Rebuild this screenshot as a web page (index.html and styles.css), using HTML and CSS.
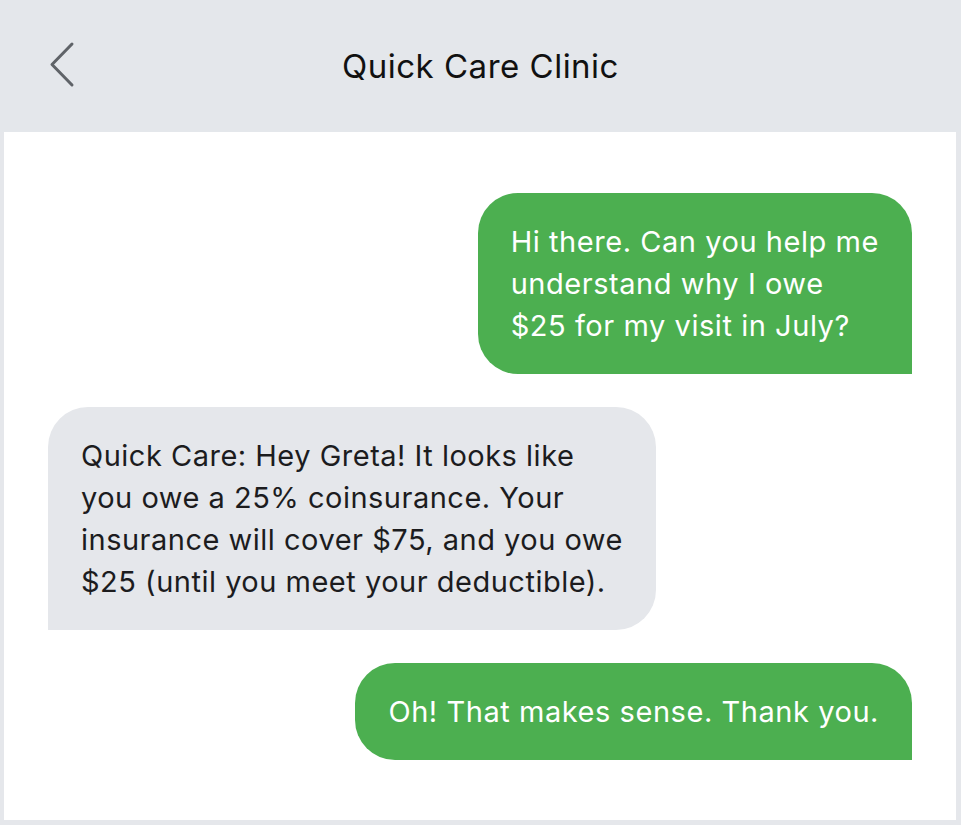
FILE: index.html
```html
<!DOCTYPE html>
<html lang="en">
<head>
<meta charset="utf-8">
<title>Quick Care Clinic</title>
<link rel="stylesheet" href="styles.css">
</head>
<body>
<div class="frame">
  <header class="header">
    <span class="back" aria-label="Back">
      <svg width="28" height="50" viewBox="0 0 28 50"><polyline points="24,4 4,24.5 24,45" fill="none" stroke="#5f6368" stroke-width="3" stroke-linecap="round" stroke-linejoin="round"/></svg>
    </span>
    <h1 class="title">Quick Care Clinic</h1>
  </header>
  <main class="chat">
    <div class="bubble out">Hi there. Can you help me<br>understand why I owe<br>$25 for my visit in July?</div>
    <div class="bubble in">Quick Care: Hey Greta! It looks like<br>you owe a 25% coinsurance. Your<br>insurance will cover $75, and you owe<br>$25 (until you meet your deductible).</div>
    <div class="bubble out">Oh! That makes sense. Thank you.</div>
  </main>
</div>
</body>
</html>
```
FILE: styles.css
```css
* { box-sizing: border-box; }
html, body { margin: 0; padding: 0; }
body {
  width: 961px;
  height: 825px;
  background: #e5e7eb;
  font-family: Inter, "Noto Sans", sans-serif;
}
.frame {
  width: 961px;
  height: 825px;
  padding: 0 5px 5px 4px;
  display: flex;
  flex-direction: column;
}
.header {
  height: 132px;
  margin: 0 -5px 0 -4px;
  background: #e4e7eb;
  display: flex;
  align-items: center;
  justify-content: center;
  position: relative;
}
.back {
  position: absolute;
  left: 48px;
  top: 40px;
  width: 28px;
  height: 50px;
}
.back svg { display: block; }
.title {
  margin: 0;
  font-size: 33px;
  font-weight: 400;
  color: #111;
  letter-spacing: 0.5px;
}
.chat {
  flex: 1;
  background: #fff;
  padding: 61px 44px 0 44px;
  display: flex;
  flex-direction: column;
  gap: 33px;
}
.bubble {
  width: fit-content;
  font-size: 29px;
  line-height: 42px;
  letter-spacing: 0.55px;
  padding: 28px 33px 27px 33px;
  border-radius: 40px;
}
.out {
  align-self: flex-end;
  background: #4caf50;
  color: #fff;
  border-bottom-right-radius: 0;
}
.in {
  align-self: flex-start;
  background: #e5e7eb;
  color: #1c1c1e;
  border-bottom-left-radius: 0;
  letter-spacing: 0.5px;
}
```
